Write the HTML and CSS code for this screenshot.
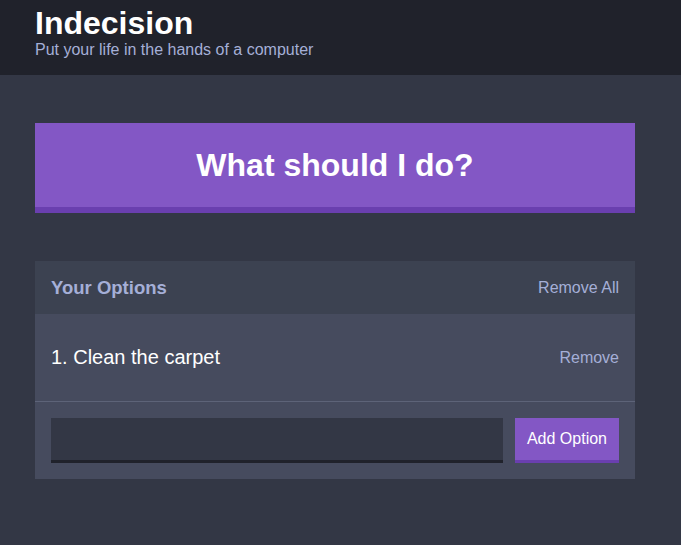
FILE: index.html
```html
<!DOCTYPE html>
<html lang="en">
<head>
<meta charset="utf-8">
<title>Indecision</title>
<link rel="stylesheet" href="styles.css">
</head>
<body>
<header class="header">
  <div class="container">
    <h1 class="header__title">Indecision</h1>
    <h2 class="header__subtitle">Put your life in the hands of a computer</h2>
  </div>
</header>
<main class="container">
  <button class="big-button">What should I do?</button>
  <section class="widget">
    <div class="widget-header">
      <h3 class="widget-header__title">Your Options</h3>
      <button class="button--link">Remove All</button>
    </div>
    <div class="option">
      <p class="option__text">1. Clean the carpet</p>
      <button class="button--link">Remove</button>
    </div>
    <form class="add-option">
      <input class="add-option__input" type="text" name="option">
      <button class="button" type="button">Add Option</button>
    </form>
  </section>
</main>
</body>
</html>
```
FILE: styles.css
```css
* { box-sizing: border-box; }
html, body { margin: 0; padding: 0; }
body {
  background: #333745;
  font-family: "Liberation Sans", Arial, Helvetica, sans-serif;
  color: #ffffff;
  min-height: 545px;
}
.container {
  max-width: 670px;
  padding: 0 35px;
}
.header {
  background: #20222b;
  padding: 5px 0 16px;
  margin-bottom: 48px;
}
.header__title {
  margin: 0;
  font-size: 32px;
  line-height: 36px;
  font-weight: bold;
  color: #ffffff;
}
.header__subtitle {
  margin: 0;
  font-size: 16px;
  line-height: 18px;
  font-weight: normal;
  color: #a5afd7;
}
.big-button {
  display: block;
  width: 100%;
  background: #8357c5;
  border: none;
  border-bottom: 6px solid #6a3faf;
  color: #ffffff;
  font-family: inherit;
  font-weight: bold;
  font-size: 32px;
  line-height: 36px;
  padding: 24px;
  margin: 0 0 48px;
  cursor: pointer;
}
.widget {
  background: #464b5e;
  margin-bottom: 48px;
}
.widget-header {
  background: #3c4251;
  display: flex;
  justify-content: space-between;
  align-items: center;
  padding: 16px;
  color: #a5afd7;
}
.widget-header__title {
  margin: 0;
  font-size: 18.5px;
  line-height: 21px;
  font-weight: bold;
}
.button--link {
  background: none;
  border: none;
  padding: 0;
  color: #a5afd7;
  font-family: inherit;
  font-size: 16px;
  cursor: pointer;
}
.option {
  display: flex;
  justify-content: space-between;
  align-items: center;
  padding: 16px;
  border-bottom: 1px solid #5d6378;
}
.option__text {
  margin: 16px 0;
  font-size: 20px;
  line-height: 23px;
  font-weight: 500;
  color: #ffffff;
}
.add-option {
  display: flex;
  padding: 16px;
  margin: 0;
}
.add-option__input {
  flex-grow: 1;
  background: #333745;
  border: none;
  border-bottom: 3px solid #20222b;
  color: #a5afd7;
  margin-right: 12px;
  padding: 8px;
  font-family: inherit;
  font-size: 16px;
  outline: none;
}
.button {
  background: #8357c5;
  border: none;
  border-bottom: 3px solid #6a3faf;
  color: #ffffff;
  font-family: inherit;
  font-size: 16px;
  line-height: 18px;
  padding: 12px;
  cursor: pointer;
}
```
